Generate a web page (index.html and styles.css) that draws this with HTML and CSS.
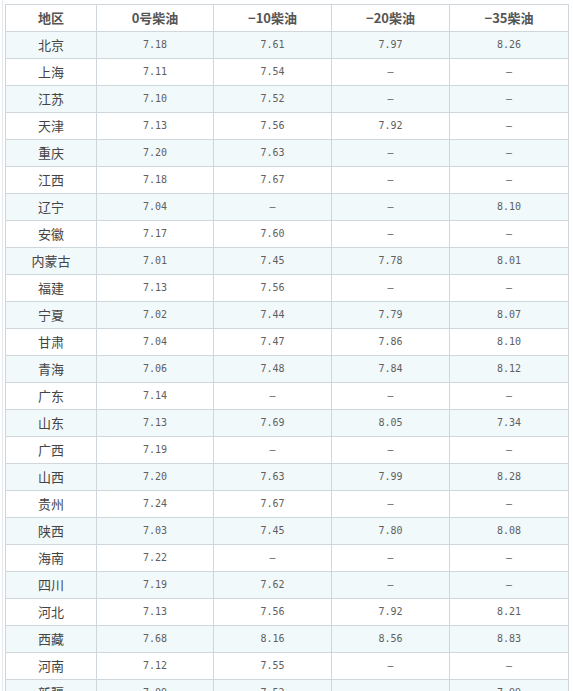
FILE: index.html
```html
<!DOCTYPE html>
<html lang="zh">
<head>
<meta charset="utf-8">
<link rel="stylesheet" href="styles.css">
</head>
<body>
<div class="wrap">
<table class="price">
<thead>
<tr><th class="c0">地区</th><th class="c1">0号柴油</th><th class="c2">−10柴油</th><th class="c3">−20柴油</th><th class="c4">−35柴油</th></tr>
</thead>
<tbody>
<tr><td class="r">北京</td><td>7.18</td><td>7.61</td><td>7.97</td><td>8.26</td></tr>
<tr><td class="r">上海</td><td>7.11</td><td>7.54</td><td>–</td><td>–</td></tr>
<tr><td class="r">江苏</td><td>7.10</td><td>7.52</td><td>–</td><td>–</td></tr>
<tr><td class="r">天津</td><td>7.13</td><td>7.56</td><td>7.92</td><td>–</td></tr>
<tr><td class="r">重庆</td><td>7.20</td><td>7.63</td><td>–</td><td>–</td></tr>
<tr><td class="r">江西</td><td>7.18</td><td>7.67</td><td>–</td><td>–</td></tr>
<tr><td class="r">辽宁</td><td>7.04</td><td>–</td><td>–</td><td>8.10</td></tr>
<tr><td class="r">安徽</td><td>7.17</td><td>7.60</td><td>–</td><td>–</td></tr>
<tr><td class="r">内蒙古</td><td>7.01</td><td>7.45</td><td>7.78</td><td>8.01</td></tr>
<tr><td class="r">福建</td><td>7.13</td><td>7.56</td><td>–</td><td>–</td></tr>
<tr><td class="r">宁夏</td><td>7.02</td><td>7.44</td><td>7.79</td><td>8.07</td></tr>
<tr><td class="r">甘肃</td><td>7.04</td><td>7.47</td><td>7.86</td><td>8.10</td></tr>
<tr><td class="r">青海</td><td>7.06</td><td>7.48</td><td>7.84</td><td>8.12</td></tr>
<tr><td class="r">广东</td><td>7.14</td><td>–</td><td>–</td><td>–</td></tr>
<tr><td class="r">山东</td><td>7.13</td><td>7.69</td><td>8.05</td><td>7.34</td></tr>
<tr><td class="r">广西</td><td>7.19</td><td>–</td><td>–</td><td>–</td></tr>
<tr><td class="r">山西</td><td>7.20</td><td>7.63</td><td>7.99</td><td>8.28</td></tr>
<tr><td class="r">贵州</td><td>7.24</td><td>7.67</td><td>–</td><td>–</td></tr>
<tr><td class="r">陕西</td><td>7.03</td><td>7.45</td><td>7.80</td><td>8.08</td></tr>
<tr><td class="r">海南</td><td>7.22</td><td>–</td><td>–</td><td>–</td></tr>
<tr><td class="r">四川</td><td>7.19</td><td>7.62</td><td>–</td><td>–</td></tr>
<tr><td class="r">河北</td><td>7.13</td><td>7.56</td><td>7.92</td><td>8.21</td></tr>
<tr><td class="r">西藏</td><td>7.68</td><td>8.16</td><td>8.56</td><td>8.83</td></tr>
<tr><td class="r">河南</td><td>7.12</td><td>7.55</td><td>–</td><td>–</td></tr>
<tr><td class="r">新疆</td><td>7.09</td><td>7.52</td><td>–</td><td>7.99</td></tr>
</tbody>
</table>
</div>
</body>
</html>
```
FILE: styles.css
```css
html, body {
  margin: 0;
  padding: 0;
  background: #ffffff;
}
body {
  height: 691px;
  overflow: hidden;
}
.wrap {
  margin-left: 2px;
  padding: 4px 0 0 2px;
  border-left: 1px solid #e4e8ec;
  width: 566px;
}
.price {
  border-collapse: collapse;
  table-layout: fixed;
  width: 564px;
  font-family: "Noto Sans CJK SC", sans-serif;
}
.price th, .price td {
  border: 1px solid #cfd7dd;
  height: 26px;
  padding: 0;
  text-align: center;
  vertical-align: middle;
  line-height: 26px;
  box-sizing: border-box;
}
.price th {
  font-size: 13px;
  font-weight: bold;
  color: #555555;
  background: #ffffff;
}
.price td {
  font-family: "DejaVu Sans Mono", monospace;
  font-size: 10px;
  color: #606060;
}
.price td.r {
  font-family: "Noto Sans CJK SC", sans-serif;
  font-size: 13px;
  color: #444444;
}
.price tbody tr:nth-child(odd) td {
  background: #f2f9fb;
}
.c0 { width: 91px; }
.c1 { width: 117px; }
.c2 { width: 118px; }
.c3 { width: 118px; }
.c4 { width: 119px; }
```
